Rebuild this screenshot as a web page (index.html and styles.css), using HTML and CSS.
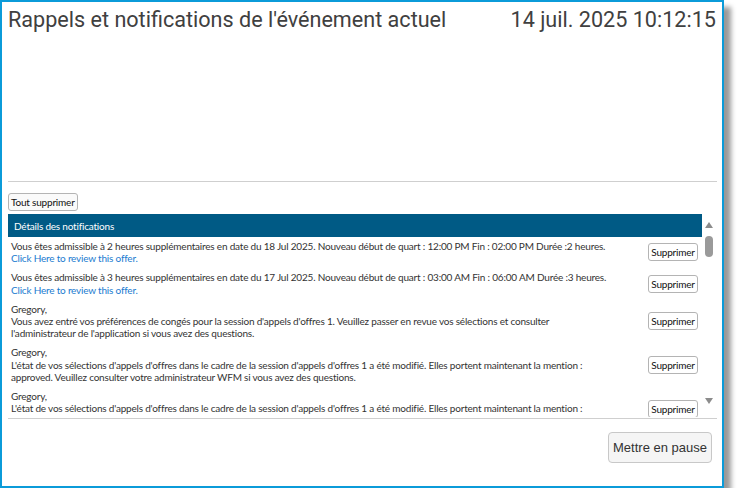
FILE: index.html
```html
<!DOCTYPE html>
<html lang="fr">
<head>
<meta charset="utf-8">
<title>Rappels et notifications</title>
<link rel="stylesheet" href="styles.css">
</head>
<body>
<div class="window">
  <div class="head">
    <div class="title-row">
      <span class="title">Rappels et notifications de l'événement actuel</span>
      <span class="clock">14 juil. 2025 10:12:15</span>
    </div>
  </div>
  <div class="toolbar">
    <button class="btn-small">Tout supprimer</button>
  </div>
  <div class="panel">
    <div class="panel-main">
      <div class="panel-header">Détails des notifications</div>
      <div class="list">
        <div class="row">
          <div class="msg">Vous êtes admissible à 2 heures supplémentaires en date du 18 Jul 2025. Nouveau début de quart : 12:00 PM Fin : 02:00 PM Durée :2 heures.<br><a class="link" href="#">Click Here to review this offer.</a></div>
          <button class="btn-small">Supprimer</button>
        </div>
        <div class="row">
          <div class="msg">Vous êtes admissible à 3 heures supplémentaires en date du 17 Jul 2025. Nouveau début de quart : 03:00 AM Fin : 06:00 AM Durée :3 heures.<br><a class="link" href="#">Click Here to review this offer.</a></div>
          <button class="btn-small">Supprimer</button>
        </div>
        <div class="row">
          <div class="msg">Gregory,<br>Vous avez entré vos préférences de congés pour la session d'appels d'offres 1. Veuillez passer en revue vos sélections et consulter<br>l'administrateur de l'application si vous avez des questions.</div>
          <button class="btn-small">Supprimer</button>
        </div>
        <div class="row">
          <div class="msg">Gregory,<br>L'état de vos sélections d'appels d'offres dans le cadre de la session d'appels d'offres 1 a été modifié. Elles portent maintenant la mention :<br>approved. Veuillez consulter votre administrateur WFM si vous avez des questions.</div>
          <button class="btn-small">Supprimer</button>
        </div>
        <div class="row">
          <div class="msg">Gregory,<br>L'état de vos sélections d'appels d'offres dans le cadre de la session d'appels d'offres 1 a été modifié. Elles portent maintenant la mention :<br>approved. Veuillez consulter votre administrateur WFM si vous avez des questions.</div>
          <button class="btn-small">Supprimer</button>
        </div>
      </div>
    </div>
    <div class="scrollbar">
      <span class="arrow-up"></span>
      <span class="thumb"></span>
      <span class="track"></span>
      <span class="arrow-down"></span>
    </div>
  </div>
  <div class="footer">
    <button class="btn-pause">Mettre en pause</button>
  </div>
</div>
</body>
</html>
```
FILE: styles.css
```css
html, body {
  margin: 0;
  padding: 0;
  background: #ffffff;
}

.window {
  width: 720px;
  height: 484px;
  border: 2px solid #0b9bd9;
  background: #ffffff;
  box-shadow: 7px 7px 5px rgba(0, 0, 0, 0.4);
  display: flex;
  flex-direction: column;
}

.head {
  height: 179px;
  margin: 0 5px 0 6px;
  border-bottom: 1px solid #cfcfcf;
}

.title-row {
  display: flex;
  justify-content: space-between;
  align-items: baseline;
  padding-top: 5px;
  font-family: Roboto, "Noto Sans", sans-serif;
  font-size: 21.6px;
  line-height: 26px;
  color: #404040;
}

.clock {
  padding-right: 1px;
}

.toolbar {
  padding: 10px 0 0 6px;
  height: 18px;
}

.btn-small {
  font-family: Lato, "Open Sans", sans-serif;
  font-size: 10px;
  letter-spacing: -0.2px;
  line-height: 14px;
  height: 18px;
  padding: 0 2px;
  color: #111111;
  background: #fafafa;
  border: 1px solid #b4b4b4;
  border-radius: 3px;
  margin: 0;
}

.panel {
  margin: 4px 0 0 6px;
  width: 708px;
  height: 203px;
  display: flex;
}

.panel-main {
  flex: 1;
  display: flex;
  flex-direction: column;
  min-width: 0;
}

.panel-header {
  height: 23px;
  background: #005a85;
  color: #ffffff;
  font-family: Lato, "Open Sans", sans-serif;
  font-size: 10px;
  letter-spacing: -0.2px;
  line-height: 24px;
  padding-left: 6px;
}

.list {
  flex: 1;
  overflow: hidden;
  font-family: Lato, "Open Sans", sans-serif;
  font-size: 10px;
  letter-spacing: -0.2px;
  line-height: 12.4px;
  color: #333333;
}

.row {
  display: flex;
  align-items: center;
  justify-content: space-between;
  padding: 3px 4px 3.5px 3px;
}

.msg {
  white-space: nowrap;
}

.link {
  color: #1a7bd0;
  text-decoration: none;
}

.row .btn-small {
  flex: none;
  width: 50px;
  padding: 0;
  background: #ffffff;
}

.scrollbar {
  width: 14px;
  display: flex;
  flex-direction: column;
  align-items: center;
  padding-top: 8px;
}

.arrow-up {
  width: 0;
  height: 0;
  border-left: 4.5px solid transparent;
  border-right: 4.5px solid transparent;
  border-bottom: 6px solid #8c8c8c;
}

.thumb {
  margin-top: 8px;
  width: 8px;
  height: 21px;
  border-radius: 4px;
  background: #9a9a9a;
}

.track {
  flex: 1;
}

.arrow-down {
  width: 0;
  height: 0;
  margin-bottom: 13px;
  border-left: 4.5px solid transparent;
  border-right: 4.5px solid transparent;
  border-top: 6px solid #8c8c8c;
}

.footer {
  margin: 1px 5px 0 6px;
  border-top: 1px solid #cfcfcf;
  display: flex;
  justify-content: flex-end;
  padding: 13px 5px 0 0;
}

.btn-pause {
  font-family: "Liberation Sans", Arial, sans-serif;
  font-size: 13px;
  color: #333333;
  background: #f5f5f5;
  border: 1px solid #c8c8c8;
  border-radius: 4px;
  height: 31px;
  width: 104px;
  padding: 0;
}
```
